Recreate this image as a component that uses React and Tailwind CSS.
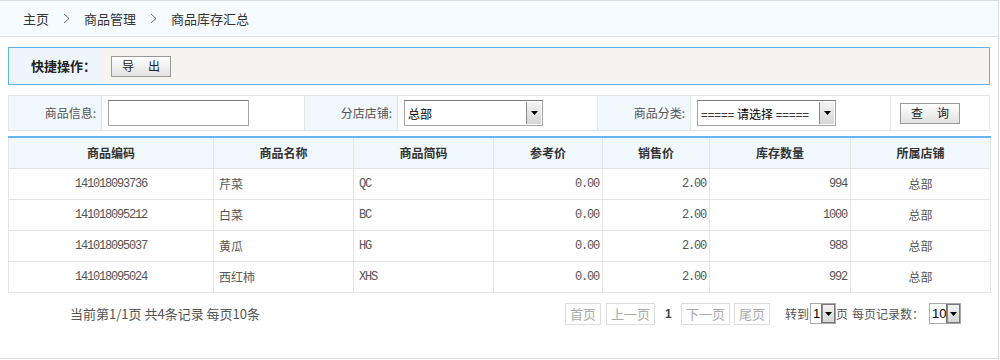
const rows = [
  { code: "141018093736", name: "芹菜", abbr: "QC", ref: "0.00", price: "2.00", qty: "994", shop: "总部" },
  { code: "141018095212", name: "白菜", abbr: "BC", ref: "0.00", price: "2.00", qty: "1000", shop: "总部" },
  { code: "141018095037", name: "黄瓜", abbr: "HG", ref: "0.00", price: "2.00", qty: "988", shop: "总部" },
  { code: "141018095024", name: "西红柿", abbr: "XHS", ref: "0.00", price: "2.00", qty: "992", shop: "总部" },
];

const cjk = { fontFamily: '"Noto Sans CJK SC", sans-serif' };
const mono = { fontFamily: '"Liberation Mono", "Noto Sans CJK SC", monospace', letterSpacing: "-1.2px" };

function Chevron() {
  return (
    <svg width="7" height="11" viewBox="0 0 7 11" className="mx-[14px]">
      <path d="M1 1 L6 5.5 L1 10" fill="none" stroke="#666" strokeWidth="1" />
    </svg>
  );
}

function DropArrow({ w = 14 }) {
  return (
    <div className="flex h-full items-center justify-center border-l border-[#888] bg-gradient-to-b from-[#f4f4f4] to-[#d6d6d6]" style={{ width: w }}>
      <svg width="7" height="4" viewBox="0 0 7 4">
        <path d="M0 0 H7 L3.5 4 Z" fill="#000" />
      </svg>
    </div>
  );
}

function FakeSelect({ value, width }) {
  return (
    <div className="flex h-[26px] items-center border border-[#a5a5a5] border-t-[#7a7a7a] bg-white" style={{ width }}>
      <span className="flex-1 whitespace-nowrap pl-[3px] pt-[2px] text-[12px] text-black">{value}</span>
      <div className="mr-[1px] h-[22px]">
        <DropArrow w={15} />
      </div>
    </div>
  );
}

function GrayButton({ a, b }) {
  return (
    <button className="flex h-[21px] w-[60px] items-center justify-center gap-[14px] whitespace-nowrap border border-[#999] bg-gradient-to-b from-white to-[#e2e2e2] text-[12px] text-[#222]">
      <span>{a}</span>
      <span>{b}</span>
    </button>
  );
}

function PageBtn({ children, w }) {
  return (
    <span className="flex h-[22px] items-center justify-center border border-[#ddd] text-[13px] text-[#aaa]" style={{ width: w }}>
      {children}
    </span>
  );
}

function SmallSelect({ value, w }) {
  return (
    <div className="flex h-[21px] items-center border border-[#aaa] bg-white" style={{ width: w }}>
      <span className="flex-1 pl-[2px] text-[13px] text-black" style={{ fontFamily: '"Liberation Sans", sans-serif' }}>{value}</span>
      <div className="h-[19px] border border-[#777]">
        <DropArrow w={12} />
      </div>
    </div>
  );
}

export default function App() {
  return (
    <div className="h-[359px] w-[999px] border-t border-r border-b border-[#dcdcdc] bg-white" style={cjk}>
      <div className="flex h-[36px] items-center border-b border-[#e0e0e0] bg-[#f6fbff] pl-[23px] text-[13px] text-[#333]">
        <span>主页</span>
        <Chevron />
        <span>商品管理</span>
        <Chevron />
        <span>商品库存汇总</span>
      </div>

      <div className="px-[8px]">
        <div className="mt-[10px] flex h-[38px] border border-[#5fb2f0]">
          <div className="flex w-[93px] items-center justify-end bg-[#eef6fd] pr-[6px] text-[13px] font-bold text-[#222]">
            快捷操作：
          </div>
          <div className="flex flex-1 items-center bg-[#f5f4f0] pl-[9px]">
            <GrayButton a="导" b="出" />
          </div>
        </div>

        <div className="mt-[10px] flex h-[36px] border border-[#e5e5e5] text-[12px] text-[#555]">
          <div className="flex w-[93px] items-center justify-end border-r border-[#e5e5e5] bg-[#f0f7fd] pr-[5px]">商品信息:</div>
          <div className="flex w-[203px] items-center border-r border-[#e5e5e5] pl-[6px]">
            <input className="h-[26px] w-[141px] border border-[#a5a5a5] border-t-[#7a7a7a] bg-white outline-none" />
          </div>
          <div className="flex w-[93px] items-center justify-end border-r border-[#e5e5e5] bg-[#f0f7fd] pr-[5px]">分店店铺:</div>
          <div className="flex w-[200px] items-center border-r border-[#e5e5e5] pl-[6px]">
            <FakeSelect value="总部" width={139} />
          </div>
          <div className="flex w-[93px] items-center justify-end border-r border-[#e5e5e5] bg-[#f0f7fd] pr-[5px]">商品分类:</div>
          <div className="flex w-[200px] items-center border-r border-[#e5e5e5] pl-[6px]">
            <FakeSelect value="===== 请选择 =====" width={139} />
          </div>
          <div className="flex flex-1 items-center pl-[9px]">
            <GrayButton a="查" b="询" />
          </div>
        </div>

        <table className="mt-[5px] w-[982px] table-fixed border-collapse border-t-2 border-t-[#66b3ee] text-[12px] text-[#555]">
          <colgroup>
            <col className="w-[205px]" />
            <col className="w-[140px]" />
            <col className="w-[140px]" />
            <col className="w-[109px]" />
            <col className="w-[107px]" />
            <col className="w-[141px]" />
            <col className="w-[140px]" />
          </colgroup>
          <thead>
            <tr className="h-[31px] bg-[#f0f7fd] text-[#333]">
              {["商品编码", "商品名称", "商品简码", "参考价", "销售价", "库存数量", "所属店铺"].map((h) => (
                <th key={h} className="border border-[#e5e5e5] border-t-0 text-center font-bold">{h}</th>
              ))}
            </tr>
          </thead>
          <tbody>
            {rows.map((r) => (
              <tr key={r.code} className="h-[31px]">
                <td className="border border-[#e5e5e5] text-center" style={mono}>{r.code}</td>
                <td className="border border-[#e5e5e5] pl-[5px]">{r.name}</td>
                <td className="border border-[#e5e5e5] pl-[5px]" style={mono}>{r.abbr}</td>
                <td className="border border-[#e5e5e5] pr-[3px] text-right" style={mono}>{r.ref}</td>
                <td className="border border-[#e5e5e5] pr-[3px] text-right" style={mono}>{r.price}</td>
                <td className="border border-[#e5e5e5] pr-[3px] text-right" style={mono}>{r.qty}</td>
                <td className="border border-[#e5e5e5] text-center">{r.shop}</td>
              </tr>
            ))}
          </tbody>
        </table>

        <div className="mt-[10px] flex items-center text-[12px] text-[#555]">
          <span className="ml-[62px] text-[13px]">当前第1/1页 共4条记录 每页10条</span>
          <div className="ml-auto mr-[29px] flex items-center">
            <PageBtn w={36}>首页</PageBtn>
            <span className="ml-[5px]"><PageBtn w={49}>上一页</PageBtn></span>
            <span className="mx-[10px] w-[6px] font-bold text-[#444]" style={{ fontFamily: '"Liberation Sans", sans-serif' }}>1</span>
            <PageBtn w={49}>下一页</PageBtn>
            <span className="ml-[4px]"><PageBtn w={36}>尾页</PageBtn></span>
            <span className="ml-[15px] mr-[1px]">转到</span>
            <SmallSelect value="1" w={26} />
            <span>页</span>
            <span className="ml-[4px] mr-[5px]">每页记录数：</span>
            <SmallSelect value="10" w={32} />
          </div>
        </div>
      </div>
    </div>
  );
}
